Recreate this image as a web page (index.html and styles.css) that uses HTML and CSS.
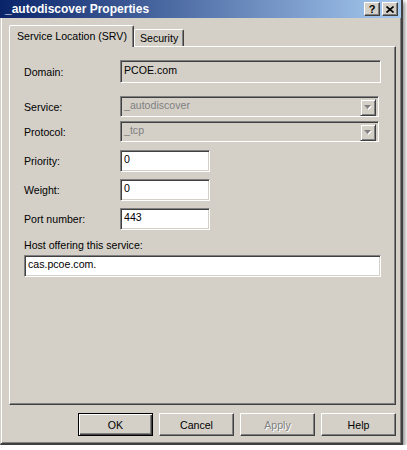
FILE: index.html
```html
<!DOCTYPE html>
<html lang="en">
<head>
    <meta charset="UTF-8">
    <title>_autodiscover Properties</title>
    <link rel="stylesheet" href="styles.css">
</head>
<body>
    <div class="window">
        <div class="titlebar">
            <span class="title">_autodiscover Properties</span>
            <div class="caption-buttons">
                <span class="cap-btn help-btn">?</span>
                <span class="cap-btn">
                    <svg width="8" height="7" viewBox="0 0 8 7">
                        <path d="M0.5 0.5 L7.5 6.5 M7.5 0.5 L0.5 6.5" stroke="#000" stroke-width="1.6" fill="none"/>
                    </svg>
                </span>
            </div>
        </div>

        <div class="client">
            <div class="tabs">
                <div class="tab active">Service Location (SRV)</div>
                <div class="tab">Security</div>
            </div>

            <div class="panel">
                <div class="row row-domain">
                    <span class="label">Domain:</span>
                    <div class="field readonly wide">PCOE.com</div>
                </div>
                <div class="row row-service">
                    <span class="label">Service:</span>
                    <div class="field combo disabled">
                        <span class="combo-text">_autodiscover</span>
                        <span class="drop-btn">
                            <svg width="8" height="5" viewBox="0 0 8 5">
                                <polygon points="1,1 8,1 4.5,5" fill="#fff"/>
                                <polygon points="0,0 7,0 3.5,4" fill="#808080"/>
                            </svg>
                        </span>
                    </div>
                </div>
                <div class="row row-protocol">
                    <span class="label">Protocol:</span>
                    <div class="field combo disabled">
                        <span class="combo-text">_tcp</span>
                        <span class="drop-btn">
                            <svg width="8" height="5" viewBox="0 0 8 5">
                                <polygon points="1,1 8,1 4.5,5" fill="#fff"/>
                                <polygon points="0,0 7,0 3.5,4" fill="#808080"/>
                            </svg>
                        </span>
                    </div>
                </div>
                <div class="row row-first-num">
                    <span class="label">Priority:</span>
                    <div class="field edit short">0</div>
                </div>
                <div class="row row-num">
                    <span class="label">Weight:</span>
                    <div class="field edit short">0</div>
                </div>
                <div class="row row-num">
                    <span class="label">Port number:</span>
                    <div class="field edit short">443</div>
                </div>
                <div class="host-label">Host offering this service:</div>
                <div class="field edit host">cas.pcoe.com.</div>
            </div>

            <div class="buttons">
                <span class="btn default">OK</span>
                <span class="btn">Cancel</span>
                <span class="btn disabled-btn">Apply</span>
                <span class="btn">Help</span>
            </div>
        </div>
    </div>
</body>
</html>
```

FILE: styles.css
```css
body {
    margin: 0;
    background: #fff;
    font-family: "Liberation Sans", Arial, sans-serif;
    font-size: 10.6px;
    color: #000;
}
.window {
    width: 403px;
    height: 445px;
    box-sizing: border-box;
    background: #d4d0c8;
    border-left: 1px solid #d4d0c8;
    border-right: 2px solid #404040;
    border-bottom: 2px solid #404040;
    box-shadow: inset 1px 0 #fff, inset -1px -1px #808080, 2px 2px 4px rgba(0, 0, 0, 0.45);
}

/* caption */
.titlebar {
    height: 18px;
    margin-left: -1px;
    display: flex;
    align-items: center;
    justify-content: space-between;
    background: linear-gradient(to right, #0a246a, #a6caf0);
}
.title {
    padding-left: 5px;
    color: #fff;
    font-weight: bold;
    font-size: 12px;
    line-height: 18px;
}
.caption-buttons {
    display: flex;
    gap: 2px;
    margin-right: 3px;
}
.cap-btn {
    width: 14px;
    height: 12px;
    display: flex;
    align-items: center;
    justify-content: center;
    background: #d4d0c8;
    border: 1px solid;
    border-color: #fff #404040 #404040 #fff;
    box-shadow: inset -1px -1px #808080;
}
.help-btn {
    font-weight: bold;
    font-size: 11px;
    line-height: 12px;
}

/* dialog body */
.client {
    padding: 8px 5px 0 8px;
}
.tabs {
    display: flex;
    align-items: flex-end;
    height: 20px;
}
.tab {
    height: 16px;
    padding: 0 5px;
    line-height: 17px;
    border: 1px solid;
    border-color: #fff #404040 transparent #fff;
    border-bottom: none;
    border-radius: 2px 2px 0 0;
    box-shadow: inset -1px 0 #808080;
}
.tab.active {
    position: relative;
    z-index: 1;
    height: 21px;
    margin-bottom: -1px;
    padding: 0 6px 0 7px;
    line-height: 20px;
    background: #d4d0c8;
}
.panel {
    height: 359px;
    box-sizing: border-box;
    padding: 13px 0 0 14px;
    border: 1px solid;
    border-color: #fff #404040 #404040 #fff;
    box-shadow: inset -1px -1px #808080;
}
.row {
    display: flex;
    align-items: center;
}
.label {
    width: 96px;
}
.row-service {
    margin-top: 13px;
}
.row-protocol {
    margin-top: 4px;
}
.row-first-num {
    margin-top: 8px;
}
.row-num {
    margin-top: 7px;
}

/* sunken controls */
.field {
    box-sizing: border-box;
    padding: 1px 3px 0;
    line-height: 14px;
    border: 1px solid;
    border-color: #808080 #fff #fff #808080;
    box-shadow: inset 1px 1px #404040, inset -1px -1px #d4d0c8;
}
.readonly {
    height: 23px;
    padding-top: 2px;
}
.wide {
    width: 261px;
}
.edit {
    height: 22px;
    background: #fff;
}
.short {
    width: 90px;
}
.host {
    width: 357px;
    margin-top: 3px;
}
.host-label {
    margin-top: 9px;
    line-height: 13px;
}
.combo {
    width: 259px;
    height: 21px;
    display: flex;
    justify-content: space-between;
    padding: 2px 2px 2px 3px;
}
.disabled .combo-text {
    color: #808080;
    line-height: 13px;
}
.drop-btn {
    width: 14px;
    height: 15px;
    display: flex;
    align-items: center;
    justify-content: center;
    background: #d4d0c8;
    border: 1px solid;
    border-color: #d4d0c8 #404040 #404040 #d4d0c8;
    box-shadow: inset 1px 1px #fff, inset -1px -1px #808080;
}

/* push buttons */
.buttons {
    display: flex;
    justify-content: flex-end;
    gap: 6px;
    margin-top: 8px;
}
.btn {
    width: 75px;
    height: 23px;
    box-sizing: border-box;
    display: flex;
    align-items: center;
    justify-content: center;
    border: 1px solid;
    border-color: #fff #404040 #404040 #fff;
    box-shadow: inset -1px -1px #808080;
}
.btn.default {
    border: 1px solid #000;
    box-shadow: inset 1px 1px #fff, inset -1px -1px #404040, inset -2px -2px #808080;
}
.disabled-btn {
    color: #808080;
    text-shadow: 1px 1px #fff;
}
```
